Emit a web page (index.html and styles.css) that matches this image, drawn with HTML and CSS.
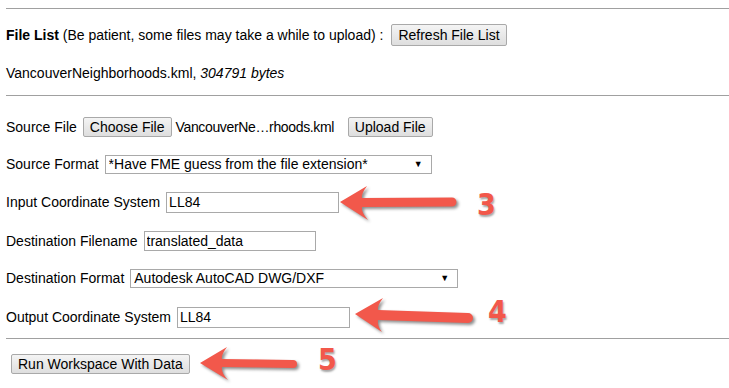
FILE: index.html
```html
<!doctype html>
<html>
<head>
	<meta charset="utf-8">
	<link rel="stylesheet" href="styles.css">
</head>
<body>

<div class="page">
	<div class="rule"></div>

	<div class="row r-list">
		<span class="label"><b>File List</b> (Be patient, some files may take a while to upload) :</span>
		<button class="btn btn-tall" id="refresh">Refresh File List</button>
	</div>

	<div class="row r-file">
		<span class="label">VancouverNeighborhoods.kml, <i>304791 bytes</i></span>
	</div>

	<div class="rule rule-mid"></div>

	<div class="row r-source">
		<label class="label" for="sourceFile">Source File</label>
		<span class="file">
			<button class="btn" id="sourceFile">Choose File</button>
			<span class="chosen">VancouverNe…rhoods.kml</span>
		</span>
		<button class="btn" id="upload">Upload File</button>
	</div>

	<div class="row r-format">
		<label class="label" for="sourceFormat">Source Format</label>
		<span class="sel sel-source">
			<select id="sourceFormat">
				<option>*Have FME guess from the file extension*</option>
			</select>
		</span>
	</div>

	<div class="row r-incs">
		<label class="label" for="inputCs">Input Coordinate System</label>
		<input id="inputCs" class="field" type="text" value="LL84"/>
	</div>

	<div class="row r-destname">
		<label class="label" for="destName">Destination Filename</label>
		<input id="destName" class="field" type="text" value="translated_data"/>
	</div>

	<div class="row r-destfmt">
		<label class="label" for="destFormat">Destination Format</label>
		<span class="sel sel-dest">
			<select id="destFormat">
				<option>Autodesk AutoCAD DWG/DXF</option>
			</select>
		</span>
	</div>

	<div class="row r-outcs">
		<label class="label" for="outputCs">Output Coordinate System</label>
		<input id="outputCs" class="field" type="text" value="LL84"/>
	</div>

	<div class="rule rule-end"></div>

	<div class="row r-run">
		<button class="btn" id="run">Run Workspace With Data</button>
	</div>
</div>

<div class="marks">
	<svg class="arrows" width="729" height="388" viewBox="0 0 729 388">
		<path d="M340 202 L367 186 Q361 194 362 198 L452 197.5 A4.5 4.5 0 0 1 452 206.5 L362 207 Q361 212 368 220 Z"/>
		<path d="M355 314 L383 298 Q377 306 378 310 L468 313 A5 5 0 0 1 468 323 L378 320 Q377 326 382 332 Z"/>
		<path d="M200 363 L227 347 Q221 355 222 359 L293 360 A4 4 0 0 1 293 368 L222 367 Q221 373 228 380 Z"/>
	</svg>
	<span class="step step-3">3</span>
	<span class="step step-4">4</span>
	<span class="step step-5">5</span>
</div>

</body>
</html>
```

FILE: styles.css
```css
body {
    margin: 0;
    font-family: "Liberation Sans", Arial, sans-serif;
    font-size: 14px;
    color: #000;
    background: #fff;
    position: relative;
    width: 729px;
    height: 388px;
    overflow: hidden;
}

.page {
    padding: 8px 0 0 6px;
}

.rule {
    border-top: 1px solid #a0a0a0;
}

.rule-mid {
    margin-top: 11px;
}

.rule-end {
    margin-top: 10px;
}

.row {
    display: flex;
    align-items: center;
    gap: 6px;
    height: 22px;
    white-space: nowrap;
}

.r-list { margin-top: 15px; }
.r-file { margin-top: 16px; }
.r-source { margin-top: 20px; }
.r-format { margin-top: 15px; }
.r-incs { margin-top: 16px; }
.r-destname { margin-top: 17px; }
.r-destfmt { margin-top: 15px; }
.r-outcs { margin-top: 17px; }
.r-run { margin-top: 14px; }

.label {
    line-height: 18px;
}

#refresh {
    margin-left: 2px;
}

.btn {
    font-family: inherit;
    font-size: 14px;
    color: #000;
    height: 20px;
    padding: 0 6px;
    line-height: 18px;
    background: linear-gradient(#f4f4f4, #dedede);
    border: 1px solid #a9a9a9;
    border-radius: 2px;
    -webkit-appearance: none;
}

.btn-tall {
    height: 22px;
}

.file {
    display: flex;
    align-items: center;
    gap: 4px;
    min-width: 257px;
}

.chosen {
    letter-spacing: -0.35px;
}

#upload {
    margin-left: 2px;
}

#run {
    margin-left: 5px;
}

.sel {
    position: relative;
    display: inline-block;
}

.sel select {
    font-family: inherit;
    font-size: 14px;
    color: #000;
    height: 19px;
    padding: 0 0 0 3px;
    line-height: 17px;
    background: #fff;
    border: 1px solid #a9a9a9;
    border-radius: 0;
    -webkit-appearance: none;
    display: block;
}

.sel::after {
    content: "▼";
    position: absolute;
    right: 9px;
    top: 3px;
    font-size: 9px;
    line-height: 12px;
    pointer-events: none;
}

.sel-source select {
    width: 327px;
}

.sel-dest select {
    width: 328px;
}

.field {
    font-family: inherit;
    font-size: 14px;
    color: #000;
    width: 173px;
    height: 21px;
    box-sizing: border-box;
    padding: 0 2px;
    border: 1px solid #a9a9a9;
    outline: none;
}

#destName {
    width: 172px;
    height: 20px;
}

.marks {
    position: absolute;
    top: 0;
    left: 0;
    width: 729px;
    height: 388px;
    pointer-events: none;
}

.arrows {
    display: block;
}

.arrows path {
    fill: #f2584b;
    filter: drop-shadow(2px 2px 1.5px rgba(0, 0, 0, 0.45));
}

.step {
    position: absolute;
    font-family: "DejaVu Sans Condensed", "DejaVu Sans", sans-serif;
    font-stretch: condensed;
    font-weight: bold;
    font-size: 30px;
    line-height: 30px;
    color: #f2584b;
    text-shadow: 1px 2px 2px rgba(0, 0, 0, 0.35);
}

.step-3 { left: 477px; top: 190px; }
.step-4 { left: 488px; top: 297px; }
.step-5 { left: 318px; top: 345px; }
```
